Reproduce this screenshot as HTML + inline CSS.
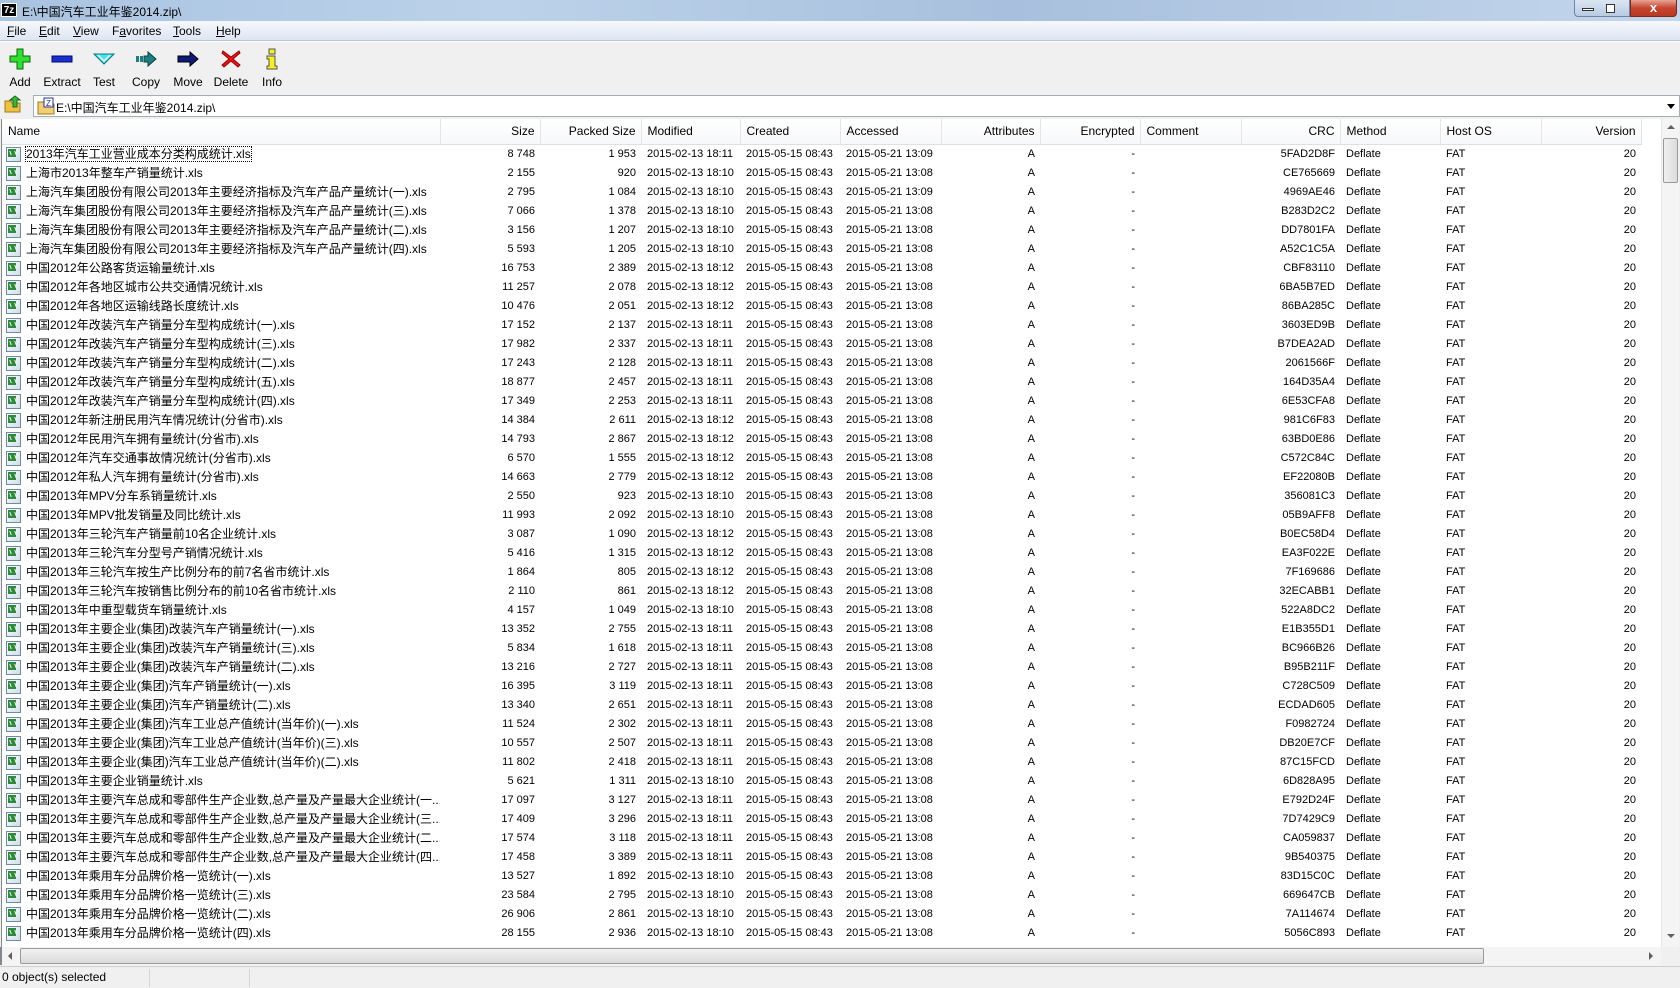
<!DOCTYPE html>
<html><head><meta charset="utf-8">
<style>
*{box-sizing:border-box;margin:0;padding:0}
body{width:1680px;height:988px;overflow:hidden;background:#f0f0f0;font-family:"Liberation Sans","Noto Sans CJK SC",sans-serif;font-size:12px;color:#000;position:relative}
.abs{position:absolute}
#title{left:0;top:0;width:1680px;height:21px;background:linear-gradient(90deg,#a9c3e0,#bcd2ea 30%,#a8c0dd 60%,#c3d6ec);}
#menu{left:0;top:21px;width:1680px;height:20px;background:linear-gradient(#f6f8fc,#dde6f3);border-bottom:1px solid #b9c5d6}
#menu span{position:absolute;top:3px;font-size:12px}
#tb{left:0;top:41px;width:1680px;height:52px;background:#f0f0f0;border-top:1px solid #fff}
.tbtn{position:absolute;top:6px;width:42px;text-align:center;font-size:12px}
.tbtn svg{display:block;margin:0 auto 5px}
#addr{left:0;top:93px;width:1680px;height:25px;background:#f0f0f0}
#combo{left:33px;top:95px;width:1647px;height:22px;background:#fff;border:1px solid #a5acb5}
#list{left:1px;top:119px;width:1660px;height:828px;background:#fff;overflow:hidden;border-left:1px solid #828790}
table{border-collapse:collapse;table-layout:fixed;width:1639px}
th{height:25px;font-weight:normal;text-align:left;padding:0 6px;border-right:1px solid #e5e5e5;border-bottom:1px solid #e0e0e0;background:linear-gradient(#fff,#f7f8fa);white-space:nowrap;font-size:12px}
td{height:19px;padding:0 6px;white-space:nowrap;overflow:hidden;line-height:19px;font-size:11px}
.r{text-align:right;padding-right:5px}
th.r{padding-right:5px}
td.n{padding-left:24px;position:relative;font-size:12px}
td.n i{position:absolute;left:4px;top:2px;width:15px;height:15px;border:1px solid #6f8aa3;background:linear-gradient(135deg,#fff,#cfdde9)}
td.n i:before{content:"";position:absolute;left:1px;top:1px;width:8px;height:8px;background:#2f8a3a}
td.n i:after{content:"";position:absolute;left:3px;top:3px;width:4px;height:4px;border-left:1px solid #fff;border-right:1px solid #fff;transform:skewX(20deg)}
#vs{left:1661px;top:119px;width:18px;height:828px;background:#f4f4f4;border-left:1px solid #e6e6e6}
#hs{left:2px;top:947px;width:1659px;height:18px;background:#f4f4f4}
#status{left:0;top:966px;width:1680px;height:22px;background:#f0f0f0;border-top:1px solid #d0d0d0}
</style></head><body>
<div id="title" class="abs">
 <div class="abs" style="left:1px;top:3px;width:16px;height:14px;background:#000;color:#fff;font-size:10px;font-weight:bold;line-height:14px;text-align:center;border:1px solid #fff">7z</div>
 <div class="abs" style="left:22px;top:3px;font-size:12px">E:\中国汽车工业年鉴2014.zip\</div>
 <div class="abs" style="left:1574px;top:0;width:56px;height:17px;border:1px solid #6d84a3;border-top:0;border-radius:0 0 0 4px;background:linear-gradient(#dbe6f3,#b8cbe2)"></div>
 <div class="abs" style="left:1582px;top:8px;width:12px;height:3px;border:1px solid #333;background:#fff"></div>
 <div class="abs" style="left:1606px;top:4px;width:9px;height:9px;border:1px solid #333;background:#fff"></div>
 <div class="abs" style="left:1630px;top:0;width:47px;height:17px;border:1px solid #7a2a20;border-top:0;border-radius:0 0 4px 0;background:linear-gradient(#e8a593,#c7452f 50%,#b83a22);color:#fff;text-align:center;font-weight:bold;font-size:13px;line-height:15px">x</div>
</div>
<div id="menu" class="abs">
 <span style="left:7px"><u>F</u>ile</span><span style="left:39px"><u>E</u>dit</span><span style="left:73px"><u>V</u>iew</span><span style="left:112px">F<u>a</u>vorites</span><span style="left:173px"><u>T</u>ools</span><span style="left:216px"><u>H</u>elp</span>
</div>
<div id="tb" class="abs">
 <div class="tbtn" style="left:-1px"><svg width="22" height="22" viewBox="0 0 22 22"><path d="M8 1h6v7h7v6h-7v7H8v-7H1V8h7z" fill="#2fe02f" stroke="#0a6a0a"/></svg>Add</div>
 <div class="tbtn" style="left:41px"><svg width="22" height="22" viewBox="0 0 22 22"><rect x="1" y="8" width="20" height="6" fill="#1a2fd0" stroke="#000a6a"/></svg>Extract</div>
 <div class="tbtn" style="left:83px"><svg width="22" height="22" viewBox="0 0 22 22"><path d="M1 6h20l-10 10z" fill="#3ee6ee" stroke="#087a80"/><path d="M5 7l6 6 6-6" fill="none" stroke="#fff" stroke-width="1.5"/></svg>Test</div>
 <div class="tbtn" style="left:125px"><svg width="22" height="22" viewBox="0 0 22 22"><rect x="1" y="8" width="3" height="6" fill="#1d7f7f"/><rect x="5" y="8" width="3" height="6" fill="#1d7f7f"/><path d="M9 8h4V4l8 7-8 7v-4H9z" fill="#1d8080" stroke="#0a4040"/></svg>Copy</div>
 <div class="tbtn" style="left:167px"><svg width="22" height="22" viewBox="0 0 22 22"><path d="M1 8h12V4l8 7-8 7v-4H1z" fill="#0c1a7a" stroke="#000"/></svg>Move</div>
 <div class="tbtn" style="left:210px"><svg width="22" height="22" viewBox="0 0 22 22"><path d="M3 3l8 6 8-6 1 2-7 6 7 6-2 2-7-6-7 6-2-2 7-6-7-6z" fill="#e8131a" stroke="#900"/></svg>Delete</div>
 <div class="tbtn" style="left:251px"><svg width="22" height="22" viewBox="0 0 22 22"><rect x="8" y="1" width="6" height="5" fill="#f5f020" stroke="#555"/><path d="M6 8h8v10h2v3H6v-3h2v-7H6z" fill="#f5f020" stroke="#555"/></svg>Info</div>
</div>
<div id="addr" class="abs">
 <svg class="abs" style="left:4px;top:2px" width="18" height="18" viewBox="0 0 18 18"><path d="M1 6h6l1 2h8v9H1z" fill="#f0c040" stroke="#9a7a20"/><path d="M9 12V5H6l5-4 5 4h-3v7z" fill="#3cb83c" stroke="#1a6a1a"/></svg>
</div>
<div id="combo" class="abs">
 <svg class="abs" style="left:3px;top:1px" width="18" height="18" viewBox="0 0 18 18"><path d="M1 5h6l1 2h9v10H1z" fill="#f2d070" stroke="#9a7a20"/><rect x="7" y="1" width="9" height="9" fill="#fff" stroke="#2030a0"/><text x="9" y="9" font-size="8" fill="#2030a0" font-family="Liberation Sans">Z</text></svg>
 <div class="abs" style="left:22px;top:3px">E:\中国汽车工业年鉴2014.zip\</div>
 <div class="abs" style="right:4px;top:8px;width:0;height:0;border-left:4px solid transparent;border-right:4px solid transparent;border-top:5px solid #000"></div>
</div>
<div id="list" class="abs">
<table>
<colgroup><col style="width:438px"><col style="width:100px"><col style="width:101px"><col style="width:99px"><col style="width:100px"><col style="width:101px"><col style="width:99px"><col style="width:100px"><col style="width:101px"><col style="width:99px"><col style="width:100px"><col style="width:101px"><col style="width:100px"></colgroup>
<tr><th>Name</th><th class="r">Size</th><th class="r">Packed Size</th><th>Modified</th><th>Created</th><th>Accessed</th><th class="r">Attributes</th><th class="r">Encrypted</th><th>Comment</th><th class="r">CRC</th><th>Method</th><th>Host OS</th><th class="r">Version</th></tr>
<tr><td class="n"><i></i><span style="outline:1px dotted #000">2013年汽车工业营业成本分类构成统计.xls</span></td><td class="r">8 748</td><td class="r">1 953</td><td>2015-02-13 18:11</td><td>2015-05-15 08:43</td><td>2015-05-21 13:09</td><td class="r">A</td><td class="r">-</td><td></td><td class="r">5FAD2D8F</td><td>Deflate</td><td>FAT</td><td class="r">20</td></tr>
<tr><td class="n"><i></i>上海市2013年整车产销量统计.xls</td><td class="r">2 155</td><td class="r">920</td><td>2015-02-13 18:10</td><td>2015-05-15 08:43</td><td>2015-05-21 13:08</td><td class="r">A</td><td class="r">-</td><td></td><td class="r">CE765669</td><td>Deflate</td><td>FAT</td><td class="r">20</td></tr>
<tr><td class="n"><i></i>上海汽车集团股份有限公司2013年主要经济指标及汽车产品产量统计(一).xls</td><td class="r">2 795</td><td class="r">1 084</td><td>2015-02-13 18:10</td><td>2015-05-15 08:43</td><td>2015-05-21 13:09</td><td class="r">A</td><td class="r">-</td><td></td><td class="r">4969AE46</td><td>Deflate</td><td>FAT</td><td class="r">20</td></tr>
<tr><td class="n"><i></i>上海汽车集团股份有限公司2013年主要经济指标及汽车产品产量统计(三).xls</td><td class="r">7 066</td><td class="r">1 378</td><td>2015-02-13 18:10</td><td>2015-05-15 08:43</td><td>2015-05-21 13:08</td><td class="r">A</td><td class="r">-</td><td></td><td class="r">B283D2C2</td><td>Deflate</td><td>FAT</td><td class="r">20</td></tr>
<tr><td class="n"><i></i>上海汽车集团股份有限公司2013年主要经济指标及汽车产品产量统计(二).xls</td><td class="r">3 156</td><td class="r">1 207</td><td>2015-02-13 18:10</td><td>2015-05-15 08:43</td><td>2015-05-21 13:08</td><td class="r">A</td><td class="r">-</td><td></td><td class="r">DD7801FA</td><td>Deflate</td><td>FAT</td><td class="r">20</td></tr>
<tr><td class="n"><i></i>上海汽车集团股份有限公司2013年主要经济指标及汽车产品产量统计(四).xls</td><td class="r">5 593</td><td class="r">1 205</td><td>2015-02-13 18:10</td><td>2015-05-15 08:43</td><td>2015-05-21 13:08</td><td class="r">A</td><td class="r">-</td><td></td><td class="r">A52C1C5A</td><td>Deflate</td><td>FAT</td><td class="r">20</td></tr>
<tr><td class="n"><i></i>中国2012年公路客货运输量统计.xls</td><td class="r">16 753</td><td class="r">2 389</td><td>2015-02-13 18:12</td><td>2015-05-15 08:43</td><td>2015-05-21 13:08</td><td class="r">A</td><td class="r">-</td><td></td><td class="r">CBF83110</td><td>Deflate</td><td>FAT</td><td class="r">20</td></tr>
<tr><td class="n"><i></i>中国2012年各地区城市公共交通情况统计.xls</td><td class="r">11 257</td><td class="r">2 078</td><td>2015-02-13 18:12</td><td>2015-05-15 08:43</td><td>2015-05-21 13:08</td><td class="r">A</td><td class="r">-</td><td></td><td class="r">6BA5B7ED</td><td>Deflate</td><td>FAT</td><td class="r">20</td></tr>
<tr><td class="n"><i></i>中国2012年各地区运输线路长度统计.xls</td><td class="r">10 476</td><td class="r">2 051</td><td>2015-02-13 18:12</td><td>2015-05-15 08:43</td><td>2015-05-21 13:08</td><td class="r">A</td><td class="r">-</td><td></td><td class="r">86BA285C</td><td>Deflate</td><td>FAT</td><td class="r">20</td></tr>
<tr><td class="n"><i></i>中国2012年改装汽车产销量分车型构成统计(一).xls</td><td class="r">17 152</td><td class="r">2 137</td><td>2015-02-13 18:11</td><td>2015-05-15 08:43</td><td>2015-05-21 13:08</td><td class="r">A</td><td class="r">-</td><td></td><td class="r">3603ED9B</td><td>Deflate</td><td>FAT</td><td class="r">20</td></tr>
<tr><td class="n"><i></i>中国2012年改装汽车产销量分车型构成统计(三).xls</td><td class="r">17 982</td><td class="r">2 337</td><td>2015-02-13 18:11</td><td>2015-05-15 08:43</td><td>2015-05-21 13:08</td><td class="r">A</td><td class="r">-</td><td></td><td class="r">B7DEA2AD</td><td>Deflate</td><td>FAT</td><td class="r">20</td></tr>
<tr><td class="n"><i></i>中国2012年改装汽车产销量分车型构成统计(二).xls</td><td class="r">17 243</td><td class="r">2 128</td><td>2015-02-13 18:11</td><td>2015-05-15 08:43</td><td>2015-05-21 13:08</td><td class="r">A</td><td class="r">-</td><td></td><td class="r">2061566F</td><td>Deflate</td><td>FAT</td><td class="r">20</td></tr>
<tr><td class="n"><i></i>中国2012年改装汽车产销量分车型构成统计(五).xls</td><td class="r">18 877</td><td class="r">2 457</td><td>2015-02-13 18:11</td><td>2015-05-15 08:43</td><td>2015-05-21 13:08</td><td class="r">A</td><td class="r">-</td><td></td><td class="r">164D35A4</td><td>Deflate</td><td>FAT</td><td class="r">20</td></tr>
<tr><td class="n"><i></i>中国2012年改装汽车产销量分车型构成统计(四).xls</td><td class="r">17 349</td><td class="r">2 253</td><td>2015-02-13 18:11</td><td>2015-05-15 08:43</td><td>2015-05-21 13:08</td><td class="r">A</td><td class="r">-</td><td></td><td class="r">6E53CFA8</td><td>Deflate</td><td>FAT</td><td class="r">20</td></tr>
<tr><td class="n"><i></i>中国2012年新注册民用汽车情况统计(分省市).xls</td><td class="r">14 384</td><td class="r">2 611</td><td>2015-02-13 18:12</td><td>2015-05-15 08:43</td><td>2015-05-21 13:08</td><td class="r">A</td><td class="r">-</td><td></td><td class="r">981C6F83</td><td>Deflate</td><td>FAT</td><td class="r">20</td></tr>
<tr><td class="n"><i></i>中国2012年民用汽车拥有量统计(分省市).xls</td><td class="r">14 793</td><td class="r">2 867</td><td>2015-02-13 18:12</td><td>2015-05-15 08:43</td><td>2015-05-21 13:08</td><td class="r">A</td><td class="r">-</td><td></td><td class="r">63BD0E86</td><td>Deflate</td><td>FAT</td><td class="r">20</td></tr>
<tr><td class="n"><i></i>中国2012年汽车交通事故情况统计(分省市).xls</td><td class="r">6 570</td><td class="r">1 555</td><td>2015-02-13 18:12</td><td>2015-05-15 08:43</td><td>2015-05-21 13:08</td><td class="r">A</td><td class="r">-</td><td></td><td class="r">C572C84C</td><td>Deflate</td><td>FAT</td><td class="r">20</td></tr>
<tr><td class="n"><i></i>中国2012年私人汽车拥有量统计(分省市).xls</td><td class="r">14 663</td><td class="r">2 779</td><td>2015-02-13 18:12</td><td>2015-05-15 08:43</td><td>2015-05-21 13:08</td><td class="r">A</td><td class="r">-</td><td></td><td class="r">EF22080B</td><td>Deflate</td><td>FAT</td><td class="r">20</td></tr>
<tr><td class="n"><i></i>中国2013年MPV分车系销量统计.xls</td><td class="r">2 550</td><td class="r">923</td><td>2015-02-13 18:10</td><td>2015-05-15 08:43</td><td>2015-05-21 13:08</td><td class="r">A</td><td class="r">-</td><td></td><td class="r">356081C3</td><td>Deflate</td><td>FAT</td><td class="r">20</td></tr>
<tr><td class="n"><i></i>中国2013年MPV批发销量及同比统计.xls</td><td class="r">11 993</td><td class="r">2 092</td><td>2015-02-13 18:10</td><td>2015-05-15 08:43</td><td>2015-05-21 13:08</td><td class="r">A</td><td class="r">-</td><td></td><td class="r">05B9AFF8</td><td>Deflate</td><td>FAT</td><td class="r">20</td></tr>
<tr><td class="n"><i></i>中国2013年三轮汽车产销量前10名企业统计.xls</td><td class="r">3 087</td><td class="r">1 090</td><td>2015-02-13 18:12</td><td>2015-05-15 08:43</td><td>2015-05-21 13:08</td><td class="r">A</td><td class="r">-</td><td></td><td class="r">B0EC58D4</td><td>Deflate</td><td>FAT</td><td class="r">20</td></tr>
<tr><td class="n"><i></i>中国2013年三轮汽车分型号产销情况统计.xls</td><td class="r">5 416</td><td class="r">1 315</td><td>2015-02-13 18:12</td><td>2015-05-15 08:43</td><td>2015-05-21 13:08</td><td class="r">A</td><td class="r">-</td><td></td><td class="r">EA3F022E</td><td>Deflate</td><td>FAT</td><td class="r">20</td></tr>
<tr><td class="n"><i></i>中国2013年三轮汽车按生产比例分布的前7名省市统计.xls</td><td class="r">1 864</td><td class="r">805</td><td>2015-02-13 18:12</td><td>2015-05-15 08:43</td><td>2015-05-21 13:08</td><td class="r">A</td><td class="r">-</td><td></td><td class="r">7F169686</td><td>Deflate</td><td>FAT</td><td class="r">20</td></tr>
<tr><td class="n"><i></i>中国2013年三轮汽车按销售比例分布的前10名省市统计.xls</td><td class="r">2 110</td><td class="r">861</td><td>2015-02-13 18:12</td><td>2015-05-15 08:43</td><td>2015-05-21 13:08</td><td class="r">A</td><td class="r">-</td><td></td><td class="r">32ECABB1</td><td>Deflate</td><td>FAT</td><td class="r">20</td></tr>
<tr><td class="n"><i></i>中国2013年中重型载货车销量统计.xls</td><td class="r">4 157</td><td class="r">1 049</td><td>2015-02-13 18:10</td><td>2015-05-15 08:43</td><td>2015-05-21 13:08</td><td class="r">A</td><td class="r">-</td><td></td><td class="r">522A8DC2</td><td>Deflate</td><td>FAT</td><td class="r">20</td></tr>
<tr><td class="n"><i></i>中国2013年主要企业(集团)改装汽车产销量统计(一).xls</td><td class="r">13 352</td><td class="r">2 755</td><td>2015-02-13 18:11</td><td>2015-05-15 08:43</td><td>2015-05-21 13:08</td><td class="r">A</td><td class="r">-</td><td></td><td class="r">E1B355D1</td><td>Deflate</td><td>FAT</td><td class="r">20</td></tr>
<tr><td class="n"><i></i>中国2013年主要企业(集团)改装汽车产销量统计(三).xls</td><td class="r">5 834</td><td class="r">1 618</td><td>2015-02-13 18:11</td><td>2015-05-15 08:43</td><td>2015-05-21 13:08</td><td class="r">A</td><td class="r">-</td><td></td><td class="r">BC966B26</td><td>Deflate</td><td>FAT</td><td class="r">20</td></tr>
<tr><td class="n"><i></i>中国2013年主要企业(集团)改装汽车产销量统计(二).xls</td><td class="r">13 216</td><td class="r">2 727</td><td>2015-02-13 18:11</td><td>2015-05-15 08:43</td><td>2015-05-21 13:08</td><td class="r">A</td><td class="r">-</td><td></td><td class="r">B95B211F</td><td>Deflate</td><td>FAT</td><td class="r">20</td></tr>
<tr><td class="n"><i></i>中国2013年主要企业(集团)汽车产销量统计(一).xls</td><td class="r">16 395</td><td class="r">3 119</td><td>2015-02-13 18:11</td><td>2015-05-15 08:43</td><td>2015-05-21 13:08</td><td class="r">A</td><td class="r">-</td><td></td><td class="r">C728C509</td><td>Deflate</td><td>FAT</td><td class="r">20</td></tr>
<tr><td class="n"><i></i>中国2013年主要企业(集团)汽车产销量统计(二).xls</td><td class="r">13 340</td><td class="r">2 651</td><td>2015-02-13 18:11</td><td>2015-05-15 08:43</td><td>2015-05-21 13:08</td><td class="r">A</td><td class="r">-</td><td></td><td class="r">ECDAD605</td><td>Deflate</td><td>FAT</td><td class="r">20</td></tr>
<tr><td class="n"><i></i>中国2013年主要企业(集团)汽车工业总产值统计(当年价)(一).xls</td><td class="r">11 524</td><td class="r">2 302</td><td>2015-02-13 18:11</td><td>2015-05-15 08:43</td><td>2015-05-21 13:08</td><td class="r">A</td><td class="r">-</td><td></td><td class="r">F0982724</td><td>Deflate</td><td>FAT</td><td class="r">20</td></tr>
<tr><td class="n"><i></i>中国2013年主要企业(集团)汽车工业总产值统计(当年价)(三).xls</td><td class="r">10 557</td><td class="r">2 507</td><td>2015-02-13 18:11</td><td>2015-05-15 08:43</td><td>2015-05-21 13:08</td><td class="r">A</td><td class="r">-</td><td></td><td class="r">DB20E7CF</td><td>Deflate</td><td>FAT</td><td class="r">20</td></tr>
<tr><td class="n"><i></i>中国2013年主要企业(集团)汽车工业总产值统计(当年价)(二).xls</td><td class="r">11 802</td><td class="r">2 418</td><td>2015-02-13 18:11</td><td>2015-05-15 08:43</td><td>2015-05-21 13:08</td><td class="r">A</td><td class="r">-</td><td></td><td class="r">87C15FCD</td><td>Deflate</td><td>FAT</td><td class="r">20</td></tr>
<tr><td class="n"><i></i>中国2013年主要企业销量统计.xls</td><td class="r">5 621</td><td class="r">1 311</td><td>2015-02-13 18:10</td><td>2015-05-15 08:43</td><td>2015-05-21 13:08</td><td class="r">A</td><td class="r">-</td><td></td><td class="r">6D828A95</td><td>Deflate</td><td>FAT</td><td class="r">20</td></tr>
<tr><td class="n"><i></i>中国2013年主要汽车总成和零部件生产企业数,总产量及产量最大企业统计(一...</td><td class="r">17 097</td><td class="r">3 127</td><td>2015-02-13 18:11</td><td>2015-05-15 08:43</td><td>2015-05-21 13:08</td><td class="r">A</td><td class="r">-</td><td></td><td class="r">E792D24F</td><td>Deflate</td><td>FAT</td><td class="r">20</td></tr>
<tr><td class="n"><i></i>中国2013年主要汽车总成和零部件生产企业数,总产量及产量最大企业统计(三...</td><td class="r">17 409</td><td class="r">3 296</td><td>2015-02-13 18:11</td><td>2015-05-15 08:43</td><td>2015-05-21 13:08</td><td class="r">A</td><td class="r">-</td><td></td><td class="r">7D7429C9</td><td>Deflate</td><td>FAT</td><td class="r">20</td></tr>
<tr><td class="n"><i></i>中国2013年主要汽车总成和零部件生产企业数,总产量及产量最大企业统计(二...</td><td class="r">17 574</td><td class="r">3 118</td><td>2015-02-13 18:11</td><td>2015-05-15 08:43</td><td>2015-05-21 13:08</td><td class="r">A</td><td class="r">-</td><td></td><td class="r">CA059837</td><td>Deflate</td><td>FAT</td><td class="r">20</td></tr>
<tr><td class="n"><i></i>中国2013年主要汽车总成和零部件生产企业数,总产量及产量最大企业统计(四...</td><td class="r">17 458</td><td class="r">3 389</td><td>2015-02-13 18:11</td><td>2015-05-15 08:43</td><td>2015-05-21 13:08</td><td class="r">A</td><td class="r">-</td><td></td><td class="r">9B540375</td><td>Deflate</td><td>FAT</td><td class="r">20</td></tr>
<tr><td class="n"><i></i>中国2013年乘用车分品牌价格一览统计(一).xls</td><td class="r">13 527</td><td class="r">1 892</td><td>2015-02-13 18:10</td><td>2015-05-15 08:43</td><td>2015-05-21 13:08</td><td class="r">A</td><td class="r">-</td><td></td><td class="r">83D15C0C</td><td>Deflate</td><td>FAT</td><td class="r">20</td></tr>
<tr><td class="n"><i></i>中国2013年乘用车分品牌价格一览统计(三).xls</td><td class="r">23 584</td><td class="r">2 795</td><td>2015-02-13 18:10</td><td>2015-05-15 08:43</td><td>2015-05-21 13:08</td><td class="r">A</td><td class="r">-</td><td></td><td class="r">669647CB</td><td>Deflate</td><td>FAT</td><td class="r">20</td></tr>
<tr><td class="n"><i></i>中国2013年乘用车分品牌价格一览统计(二).xls</td><td class="r">26 906</td><td class="r">2 861</td><td>2015-02-13 18:10</td><td>2015-05-15 08:43</td><td>2015-05-21 13:08</td><td class="r">A</td><td class="r">-</td><td></td><td class="r">7A114674</td><td>Deflate</td><td>FAT</td><td class="r">20</td></tr>
<tr><td class="n"><i></i>中国2013年乘用车分品牌价格一览统计(四).xls</td><td class="r">28 155</td><td class="r">2 936</td><td>2015-02-13 18:10</td><td>2015-05-15 08:43</td><td>2015-05-21 13:08</td><td class="r">A</td><td class="r">-</td><td></td><td class="r">5056C893</td><td>Deflate</td><td>FAT</td><td class="r">20</td></tr>
</table>
</div>
<div id="vs" class="abs">
 <div class="abs" style="left:5px;top:6px;border-left:4px solid transparent;border-right:4px solid transparent;border-bottom:4px solid #606060"></div>
 <div class="abs" style="left:1px;top:19px;width:15px;height:45px;border:1px solid #9a9a9a;border-radius:2px;background:linear-gradient(90deg,#f0f0f0,#dcdcdc)"></div>
 <div class="abs" style="left:5px;top:815px;border-left:4px solid transparent;border-right:4px solid transparent;border-top:4px solid #606060"></div>
</div>
<div id="hs" class="abs">
 <div class="abs" style="left:6px;top:5px;border-top:4px solid transparent;border-bottom:4px solid transparent;border-right:4px solid #606060"></div>
 <div class="abs" style="left:18px;top:1px;width:1464px;height:16px;border:1px solid #9a9a9a;border-radius:2px;background:linear-gradient(#f2f2f2,#dadada)"></div>
 <div class="abs" style="left:1647px;top:5px;border-top:4px solid transparent;border-bottom:4px solid transparent;border-left:4px solid #606060"></div>
</div>
<div class="abs" style="left:0;top:947px;width:2px;height:18px;background:#828790"></div>
<div id="status" class="abs">
 <div class="abs" style="left:2px;top:3px">0 object(s) selected</div>
 <div class="abs" style="left:149px;top:2px;width:1px;height:18px;background:#d5d5d5"></div>
 <div class="abs" style="left:249px;top:2px;width:1px;height:18px;background:#d5d5d5"></div>
</div>
</body></html>
